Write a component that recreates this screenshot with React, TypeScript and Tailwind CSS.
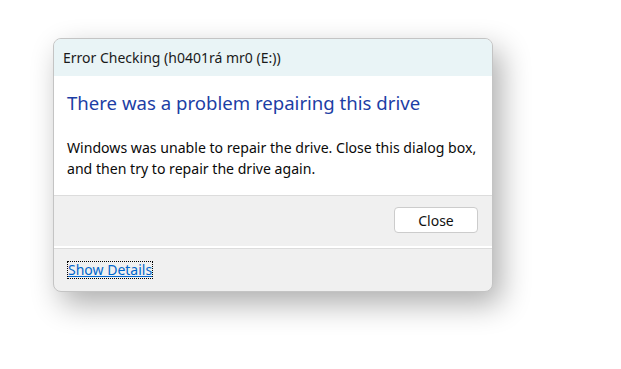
export default function App() {
  return (
    <div
      className="min-h-screen bg-white pl-[53px] pt-[38px]"
      style={{ fontFamily: '"Noto Sans", "Open Sans", sans-serif' }}
    >
      <div className="w-[440px] overflow-hidden rounded-[8px] border border-[#c4c4c4] bg-[#f0f0f0] shadow-[8px_12px_30px_rgba(0,0,0,0.32)]">
        <div className="flex h-[37px] items-center bg-[#e9f4f6] pl-[9px] text-[14px] text-[#1a1a1a]">
          Error Checking (h0401rá mr0 (E:))
        </div>
        <div className="bg-white px-[13px] pb-[16px] pt-[13px]">
          <div className="text-[18.6px] leading-[28px] text-[#1c3ea5]">
            There was a problem repairing this drive
          </div>
          <p className="mt-[20px] text-[14.1px] leading-[21px] text-[#0a0a0a]">
            Windows was unable to repair the drive. Close this dialog box, and
            then try to repair the drive again.
          </p>
        </div>
        <div className="flex h-[51px] items-center justify-end border-t border-[#dcdcdc] pb-[2px] pr-[14px]">
          <button className="h-[26px] w-[84px] rounded-[4px] border border-[#cccccc] bg-white text-[14px] text-[#111]">
            Close
          </button>
        </div>
        <div className="flex h-[45px] items-start border-t-2 border-t-white pl-[13px] pt-[13px] shadow-[inset_0_1px_0_#dcdcdc]">
          <a
            href="#"
            className="border border-dotted border-black text-[14px] leading-[16px] text-[#0066cc] underline"
          >
            Show Details
          </a>
        </div>
      </div>
    </div>
  );
}
